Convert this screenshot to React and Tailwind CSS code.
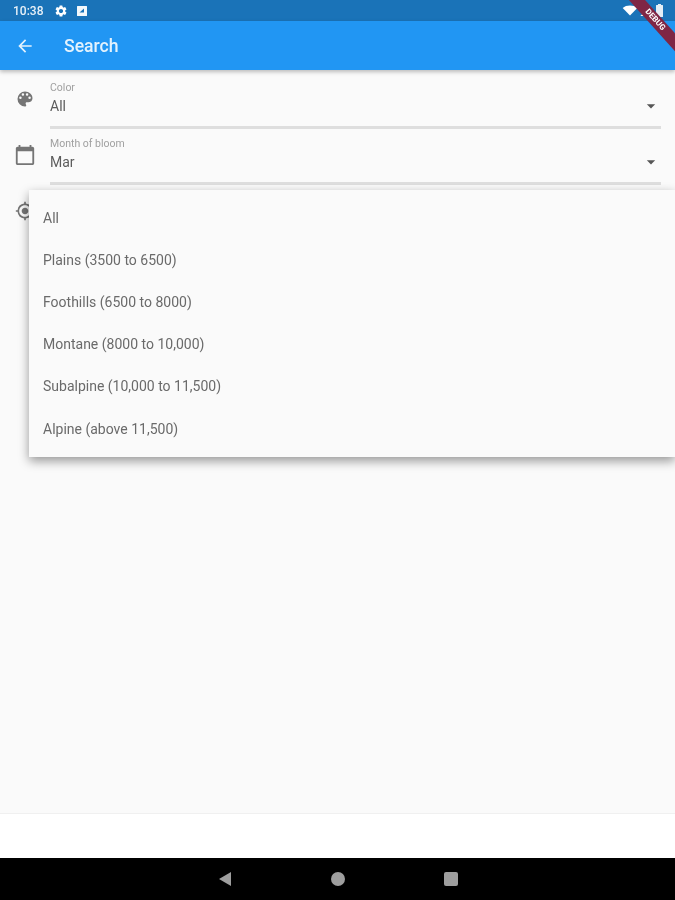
import React from "react";

const Arrow = () => (
  <svg width="20" height="20" viewBox="0 0 24 24" className="fill-[#555555]">
    <path d="M7 10l5 5 5-5z" />
  </svg>
);

const Field = ({ icon, label, value }) => (
  <div className="flex h-[56px] items-start">
    <div className="flex h-[56px] w-[50px] shrink-0 items-center justify-center pt-[1px]">{icon}</div>
    {label ? (
      <div className="mr-[14px] flex min-w-0 flex-1 flex-col pt-[11px]">
        <div className="h-[14px] text-[10.5px] leading-[14px] text-[#a0a0a0]">{label}</div>
        <div className="-mt-[1px] flex h-[24px] items-center justify-between">
          <span className="text-[14px] leading-[20px] text-[#5c5c5c]">{value}</span>
          <span className="flex w-[20px] justify-center"><Arrow /></span>
        </div>
        <div className="mt-[8px] h-[3px] bg-[#dedede]" />
      </div>
    ) : null}
  </div>
);

const items = [
  "All",
  "Plains (3500 to 6500)",
  "Foothills (6500 to 8000)",
  "Montane (8000 to 10,000)",
  "Subalpine (10,000 to 11,500)",
  "Alpine (above 11,500)",
];

export default function App() {
  return (
    <div className="h-[900px] w-[675px] overflow-hidden">
      <div className="relative flex h-[900px] w-[675px] flex-col overflow-hidden bg-[#fafafa] font-['Roboto',sans-serif] blur-[0.5px]">
        <div className="flex h-[21px] shrink-0 items-center justify-between bg-[#1a73b8] pl-[13px] pr-[12px] text-white">
          <div className="flex items-center">
            <span className="w-[32px] text-[12px] font-medium leading-none text-[#e8f1f8]">10:38</span>
            <svg width="14" height="14" viewBox="0 0 24 24" className="ml-[9px] fill-white">
              <path d="M19.14 12.94c.04-.3.06-.61.06-.94 0-.32-.02-.64-.07-.94l2.03-1.58a.49.49 0 0 0 .12-.61l-1.92-3.32a.488.488 0 0 0-.59-.22l-2.39.96c-.5-.38-1.03-.7-1.62-.94l-.36-2.54a.484.484 0 0 0-.48-.41h-3.84c-.24 0-.43.17-.47.41l-.36 2.54c-.59.24-1.13.57-1.62.94l-2.39-.96c-.22-.08-.47 0-.59.22L2.74 8.87c-.12.21-.08.47.12.61l2.03 1.58c-.05.3-.09.63-.09.94s.02.64.07.94l-2.03 1.58a.49.49 0 0 0-.12.61l1.92 3.32c.12.22.37.29.59.22l2.39-.96c.5.38 1.03.7 1.62.94l.36 2.54c.05.24.24.41.48.41h3.84c.24 0 .44-.17.47-.41l.36-2.54c.59-.24 1.13-.56 1.62-.94l2.39.96c.22.08.47 0 .59-.22l1.92-3.32c.12-.22.07-.47-.12-.61l-2.01-1.58zM12 15.6c-1.98 0-3.6-1.62-3.6-3.6s1.62-3.6 3.6-3.6 3.6 1.62 3.6 3.6-1.62 3.6-3.6 3.6z" />
            </svg>
            <svg width="12" height="12" viewBox="0 0 12 12" className="ml-[8px]">
              <path fillRule="evenodd" fill="#f4f8fb" d="M1.5 1h9a.5.5 0 0 1 .5.5v9a.5.5 0 0 1-.5.5h-9a.5.5 0 0 1-.5-.5v-9a.5.5 0 0 1 .5-.5zM3.5 7.5h4.5V3.5z" />
            </svg>
          </div>
          <div className="flex items-center">
            <svg width="16" height="11" viewBox="0 0 16 12" className="fill-white">
              <path d="M0 3.2C2 1.4 4.8 0.5 8 0.5s6 .9 8 2.7L8 11.5z" />
            </svg>
            <svg width="11" height="11" viewBox="0 0 12 12" className="ml-[1px] mt-[2px] fill-white">
              <path d="M11 1.5V11H1.5z" />
            </svg>
            <svg width="7" height="13" viewBox="0 0 7 13" className="ml-[6px] fill-[#e3eef6]">
              <path d="M2 0h3v1h1.5a.5.5 0 0 1 .5.5v11a.5.5 0 0 1-.5.5H.5a.5.5 0 0 1-.5-.5v-11A.5.5 0 0 1 .5 1H2z" />
            </svg>
          </div>
        </div>

        <div className="relative z-10 flex h-[49px] shrink-0 items-center bg-[#2196f3] pl-[15px] shadow-[0_2px_4px_rgba(0,0,0,0.25)]">
          <svg width="20" height="20" viewBox="0 0 24 24" className="fill-[#e3f2fd]">
            <path d="M20 11H7.83l5.59-5.59L12 4l-8 8 8 8 1.41-1.41L7.83 13H20v-2z" />
          </svg>
          <span className="ml-[29px] pt-[3px] text-[17.6px] font-medium leading-none text-[#e3f2fd]">Search</span>
        </div>

        <div className="relative flex-1">
          <Field
            label="Color"
            value="All"
            icon={
              <svg width="20" height="20" viewBox="0 0 24 24" className="fill-[#757575]">
                <path d="M12 3a9 9 0 0 0 0 18c.83 0 1.5-.67 1.5-1.5 0-.39-.15-.74-.39-1.01-.23-.26-.38-.61-.38-.99 0-.83.67-1.5 1.5-1.5H16c2.76 0 5-2.24 5-5 0-4.42-4.03-8-9-8zm-5.5 9a1.5 1.5 0 1 1 0-3 1.5 1.5 0 0 1 0 3zm3-4a1.5 1.5 0 1 1 0-3 1.5 1.5 0 0 1 0 3zm5 0a1.5 1.5 0 1 1 0-3 1.5 1.5 0 0 1 0 3zm3 4a1.5 1.5 0 1 1 0-3 1.5 1.5 0 0 1 0 3z" />
              </svg>
            }
          />
          <Field
            label="Month of bloom"
            value="Mar"
            icon={
              <svg width="22" height="22" viewBox="0 0 24 24" className="fill-[#757575]">
                <path d="M20 3h-1V1h-2v2H7V1H5v2H4c-1.1 0-2 .9-2 2v16c0 1.1.9 2 2 2h16c1.1 0 2-.9 2-2V5c0-1.1-.9-2-2-2zm0 18H4V8h16v13z" />
              </svg>
            }
          />
          <Field
            icon={
              <svg width="20" height="20" viewBox="0 0 24 24" className="fill-[#757575]">
                <path d="M12 8c-2.21 0-4 1.79-4 4s1.79 4 4 4 4-1.79 4-4-1.79-4-4-4zm8.94 3A8.994 8.994 0 0 0 13 3.06V1h-2v2.06A8.994 8.994 0 0 0 3.06 11H1v2h2.06A8.994 8.994 0 0 0 11 20.94V23h2v-2.06A8.994 8.994 0 0 0 20.94 13H23v-2h-2.06zM12 19c-3.87 0-7-3.13-7-7s3.13-7 7-7 7 3.13 7 7-3.13 7-7 7z" />
              </svg>
            }
          />

          <div className="absolute left-[29px] right-0 top-[120px] flex flex-col bg-[#fafafa] pb-[7px] pt-[7px] shadow-[0_4px_10px_rgba(0,0,0,0.4)]">
            {items.map((t) => (
              <div key={t} className="flex h-[42.2px] items-center pl-[14px] text-[14px] text-[#6a6a6a]">
                {t}
              </div>
            ))}
          </div>
        </div>

        <div className="h-[45px] shrink-0 border-t border-[#f0f0f0] bg-white" />

        <div className="flex h-[42px] shrink-0 items-center justify-center gap-[99px] bg-black">
          <svg width="14" height="16" viewBox="0 0 14 16" className="fill-[#9e9e9e]">
            <path d="M13 1v14L1 8z" />
          </svg>
          <div className="h-[14px] w-[14px] rounded-full bg-[#9e9e9e]" />
          <div className="h-[14px] w-[14px] rounded-[2px] bg-[#9e9e9e]" />
        </div>

        <div className="absolute right-[-25px] top-[14px] z-20 w-[90px] rotate-[48deg] bg-[#7f2645] text-center text-[8px] font-bold leading-[12px] text-white">
          DEBUG
        </div>
      </div>
    </div>
  );
}
